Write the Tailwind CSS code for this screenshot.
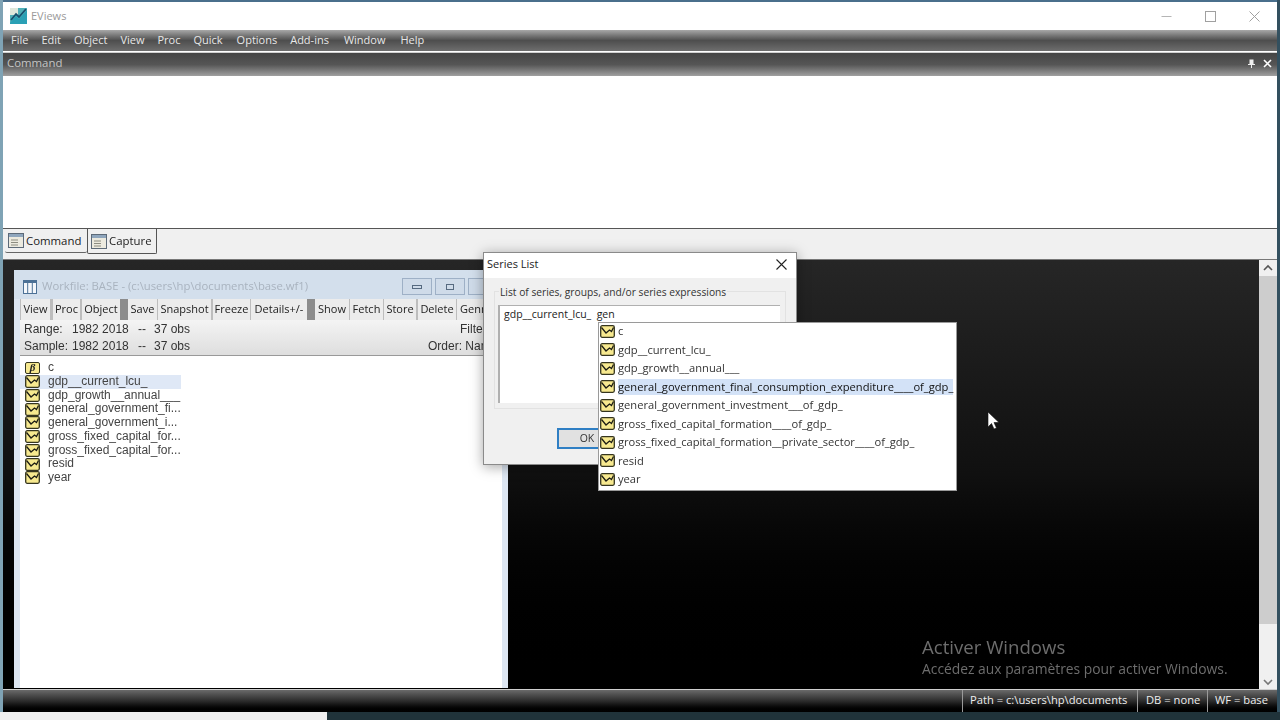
<!DOCTYPE html>
<html>
<head>
<meta charset="utf-8">
<title>EViews</title>
<script src="https://cdn.jsdelivr.net/npm/@tailwindcss/browser@4"></script>
</head>
<body class="w-[1280px] h-[720px] overflow-hidden bg-white font-['Open_Sans',sans-serif]">

<!-- shared icons -->
<svg class="hidden">
    <symbol id="series" viewBox="0 0 15 13">
        <rect x="0.7" y="0.7" width="13.6" height="11.6" rx="1.5" fill="#f7e98f" stroke="#35351f" stroke-width="1.3"/>
        <path d="M1.5 2.5 L6 8 L9.5 5 L11.5 6.5 L13.5 2.5" fill="none" stroke="#1c1c14" stroke-width="1.3"/>
    </symbol>
    <symbol id="doc" viewBox="0 0 16 15">
        <rect x="0.5" y="0.5" width="15" height="14" fill="#eceadf" stroke="#5d6a78"/>
        <rect x="1" y="1" width="14" height="3" fill="#8fa6bd"/>
        <path d="M3 7H10M3 9.5H10M3 12H10" stroke="#8c8c80"/>
    </symbol>
</svg>

<div class="relative w-[1280px] h-[720px] flex flex-col blur-[0.4px] border-l-[3px] border-l-[#7fa3b5] border-r-[3px] border-r-[#33505f]">
    <!-- Title bar -->
    <div class="h-[30px] shrink-0 bg-white flex items-center pl-[7px] border-t-[2px] border-t-[#4a6f8c]">
        <svg width="17" height="16" viewBox="0 0 17 16">
            <rect width="17" height="16" fill="#4fb0b8"/>
            <rect width="8" height="7" fill="#dfe8dc"/>
            <path d="M0 15 L6 8 L9 11 L17 2 V16 H0Z" fill="#2aa0b5"/>
            <path d="M1 12 L6 6 L9 9 L16 1" fill="none" stroke="#17506e" stroke-width="1.8"/>
        </svg>
        <span class="ml-[4px] text-[11px] text-[#9a9a9a]">EViews</span>
        <div class="ml-auto flex items-center gap-[33px] pr-[17px]">
            <svg width="11" height="11" viewBox="0 0 11 11"><path d="M0.5 5.5H10.5" stroke="#b5b5b5"/></svg>
            <svg width="11" height="11" viewBox="0 0 11 11"><rect x="0.5" y="0.5" width="10" height="10" fill="none" stroke="#a0a0a0"/></svg>
            <svg width="11" height="11" viewBox="0 0 11 11"><path d="M0.5 0.5L10.5 10.5M10.5 0.5L0.5 10.5" stroke="#a0a0a0"/></svg>
        </div>
    </div>

    <!-- Menu -->
    <div class="h-[21px] shrink-0 flex items-center pl-[8px] gap-[13px] text-[11px] text-[#e8e8e8] bg-gradient-to-b from-[#a8a8a8] via-[#4e4e4e] to-[#6e6e6e]">
        <span>File</span><span>Edit</span><span>Object</span><span>View</span><span>Proc</span><span>Quick</span><span class="ml-[1px]">Options</span><span>Add-ins</span><span class="ml-[2px]">Window</span><span class="ml-[2px]">Help</span>
    </div>

    <!-- Command pane -->
    <div class="h-[24px] shrink-0 mt-[1px] flex items-center pb-[3px] pl-[4px] pr-[5px] text-[11.4px] text-[#c4c4c4] bg-gradient-to-b from-[#454545] via-[#555555] to-[#a0a0a0] border-t border-[#d0d0d0]">
        <span>Command</span>
        <div class="ml-auto flex items-center gap-[7px]">
            <svg width="9" height="9" viewBox="0 0 9 9"><path d="M2.5 0.5H6.5V5H8V6H5V9H4V6H1V5H2.5Z" fill="#eeeeee"/></svg>
            <svg width="9" height="9" viewBox="0 0 9 9"><path d="M1 1L8 8M8 1L1 8" stroke="#ffffff" stroke-width="1.6"/></svg>
        </div>
    </div>
    <div class="h-[153px] shrink-0 bg-white border-b border-[#555555]"></div>

    <!-- Tabs -->
    <div class="h-[30px] shrink-0 bg-[#f0f0f0] flex items-start pl-[2px] text-[11.4px] text-[#222222]">
        <div class="h-[24px] w-[82px] flex items-center gap-[2px] pl-[3px] border-b border-[#666666] rounded-b-[2px]">
            <svg width="16" height="15"><use href="#doc"/></svg><span>Command</span>
        </div>
        <div class="h-[25px] w-[70px] flex items-center gap-[2px] pl-[3px] border-x border-b border-[#555555] rounded-b-[2px]">
            <svg width="16" height="15"><use href="#doc"/></svg><span>Capture</span>
        </div>
    </div>

    <!-- MDI area + scrollbar -->
    <div class="flex-1 min-h-0 flex border-t border-[#777777]">
        <div class="flex-1 bg-gradient-to-b from-[#262626] via-[#101010] to-[#000000]"></div>
        <div class="w-[18px] flex flex-col items-center bg-[#f0f0f0] pt-[4px] pb-[3px]">
            <svg width="10" height="7" viewBox="0 0 10 7"><path d="M1 6L5 2L9 6" fill="none" stroke="#555555" stroke-width="1.6"/></svg>
            <div class="w-full h-[348px] mt-[5px] bg-[#cdcdcd]"></div>
            <svg class="mt-auto" width="10" height="7" viewBox="0 0 10 7"><path d="M1 1L5 5L9 1" fill="none" stroke="#777777" stroke-width="1.6"/></svg>
        </div>
    </div>

    <!-- Status bar -->
    <div class="h-[23px] shrink-0 flex items-stretch justify-end text-[11.2px] text-[#eeeeee] whitespace-nowrap bg-gradient-to-b from-[#6a6a6a] via-[#2c2c2c] to-[#000000] border-t border-[#cfcfcf]">
        <div class="w-[175px] flex items-center pb-[1px] pl-[7px] border-l border-[#9a9a9a]">Path = c:\users\hp\documents</div>
        <div class="w-[70px] flex items-center pb-[1px] pl-[8px] border-l border-[#9a9a9a]">DB = none</div>
        <div class="w-[70px] flex items-center pb-[1px] pl-[7px] border-l border-[#9a9a9a]">WF = base</div>
    </div>

    <!-- Desktop strip at the very bottom -->
    <div class="h-[8px] shrink-0 flex -ml-[3px] -mr-[3px]">
        <div class="w-[327px] bg-[#efefef]"></div>
        <div class="flex-1 bg-[#20333a]"></div>
    </div>

    <!-- Activation watermark -->
    <div class="absolute left-[919px] top-[635px] text-[#6d6d6d] whitespace-nowrap">
        <div class="text-[18.6px] leading-[24px]">Activer Windows</div>
        <div class="text-[13.85px] leading-[20px]">Accédez aux paramètres pour activer Windows.</div>
    </div>

    <!-- Workfile window -->
    <div class="absolute left-[11px] top-[270px] w-[494px] h-[418px] flex flex-col bg-white border-x-[6px] border-[#dde6f2] font-['Liberation_Sans',sans-serif]">
        <div class="h-[29px] -mx-[6px] shrink-0 flex items-center pl-[9px] pt-[4px] bg-[#d3dfec]">
            <svg width="14" height="14" viewBox="0 0 14 14">
                <rect x="0.5" y="0.5" width="13" height="13" fill="#f4f7fb" stroke="#4c7196"/>
                <path d="M4.7 1V13M9.3 1V13" stroke="#4c7196"/><rect x="1" y="1" width="12" height="2" fill="#4c7196"/>
            </svg>
            <span class="ml-[5px] text-[11.3px] text-[#a9b3bf] font-['Open_Sans',sans-serif]">Workfile: BASE - (c:\users\hp\documents\base.wf1)</span>
            <div class="ml-auto flex gap-[3px] mr-[10px]">
                <div class="w-[30px] h-[17px] flex items-center justify-center border border-[#9eb0c6] bg-[#cfdbe9]"><div class="w-[10px] h-[4px] border border-[#566a80]"></div></div>
                <div class="w-[30px] h-[17px] flex items-center justify-center border border-[#9eb0c6] bg-[#cfdbe9]"><div class="w-[8px] h-[6px] border border-[#566a80]"></div></div>
                <div class="w-[30px] h-[17px] border border-[#9eb0c6] bg-[#cfdbe9]"></div>
            </div>
        </div>
        <!-- Toolbar -->
        <div class="h-[21px] shrink-0 flex items-stretch pl-[1px] bg-[#bdbdbd] text-[11px] text-[#222222] font-['Open_Sans',sans-serif]">
            <div class="w-[29px] flex items-center justify-center bg-[#ececec]">View</div>
            <div class="w-[27px] ml-[3px] flex items-center justify-center bg-[#ececec]">Proc</div>
            <div class="w-[38px] ml-[2px] flex items-center justify-center bg-[#ececec]">Object</div>
            <div class="w-[8px] bg-[#8c8c8c]"></div>
            <div class="w-[29px] flex items-center justify-center bg-[#ececec]">Save</div>
            <div class="w-[54px] flex items-center justify-center bg-[#ececec] border-l border-[#bdbdbd]">Snapshot</div>
            <div class="w-[37px] ml-[2px] flex items-center justify-center bg-[#ececec]">Freeze</div>
            <div class="w-[56px] ml-[1px] flex items-center justify-center bg-[#ececec]">Details+/-</div>
            <div class="w-[8px] bg-[#8c8c8c]"></div>
            <div class="w-[34px] flex items-center justify-center bg-[#ececec]">Show</div>
            <div class="w-[33px] ml-[1px] flex items-center justify-center bg-[#ececec]">Fetch</div>
            <div class="w-[32px] ml-[1px] flex items-center justify-center bg-[#ececec]">Store</div>
            <div class="w-[38px] ml-[2px] flex items-center justify-center bg-[#ececec]">Delete</div>
            <div class="flex-1 ml-[1px] bg-[#ececec] pl-[3px] flex items-center">Genr</div>
        </div>
        <!-- Range / Sample -->
        <div class="h-[36px] shrink-0 flex justify-between pt-[1px] text-[12px] leading-[17px] text-[#333333] bg-gradient-to-b from-[#f4f4f4] to-[#dedede] border-b border-[#999999]">
            <div class="pl-[4px]">
                <div class="flex"><span class="w-[48px]">Range:</span><span class="w-[58px]">1982 2018</span><span class="w-[16px] ml-[8px]">--</span><span>37 obs</span></div>
                <div class="flex"><span class="w-[48px]">Sample:</span><span class="w-[58px]">1982 2018</span><span class="w-[16px] ml-[8px]">--</span><span>37 obs</span></div>
            </div>
            <div class="w-[74px] whitespace-nowrap">
                <div class="pl-[32px]">Filter</div>
                <div>Order: Name</div>
            </div>
        </div>
        <!-- Series list -->
        <div class="flex-1 pt-[5px] text-[12px] leading-[13.75px] text-[#444444]">
            <div class="w-[161px] h-[13.75px] pl-[5px] flex items-center">
                <span class="w-[15px] h-[12px] flex items-center justify-center border border-[#35351f] rounded-[2px] bg-[#f7e98f] text-[11px] font-bold italic text-[#222222] font-['Liberation_Serif',serif]">β</span>
                <span class="ml-[8px]">c</span>
            </div>
            <div class="w-[161px] h-[13.75px] pl-[5px] flex items-center bg-[#dfe8f6]"><svg width="15" height="13" class="shrink-0"><use href="#series"/></svg><span class="ml-[8px]">gdp__current_lcu_</span></div>
            <div class="w-[161px] h-[13.75px] pl-[5px] flex items-center"><svg width="15" height="13" class="shrink-0"><use href="#series"/></svg><span class="ml-[8px]">gdp_growth__annual___</span></div>
            <div class="w-[161px] h-[13.75px] pl-[5px] flex items-center"><svg width="15" height="13" class="shrink-0"><use href="#series"/></svg><span class="ml-[8px]">general_government_fi...</span></div>
            <div class="w-[161px] h-[13.75px] pl-[5px] flex items-center"><svg width="15" height="13" class="shrink-0"><use href="#series"/></svg><span class="ml-[8px]">general_government_i...</span></div>
            <div class="w-[161px] h-[13.75px] pl-[5px] flex items-center"><svg width="15" height="13" class="shrink-0"><use href="#series"/></svg><span class="ml-[8px]">gross_fixed_capital_for...</span></div>
            <div class="w-[161px] h-[13.75px] pl-[5px] flex items-center"><svg width="15" height="13" class="shrink-0"><use href="#series"/></svg><span class="ml-[8px]">gross_fixed_capital_for...</span></div>
            <div class="w-[161px] h-[13.75px] pl-[5px] flex items-center"><svg width="15" height="13" class="shrink-0"><use href="#series"/></svg><span class="ml-[8px]">resid</span></div>
            <div class="w-[161px] h-[13.75px] pl-[5px] flex items-center"><svg width="15" height="13" class="shrink-0"><use href="#series"/></svg><span class="ml-[8px]">year</span></div>
        </div>
    </div>

    <!-- Series List dialog -->
    <div class="absolute left-[480px] top-[252px] w-[314px] h-[213px] bg-[#f0f0f0] border border-[#8a8a8a] shadow-[0_2px_12px_rgba(0,0,0,0.35)]">
        <div class="h-[25px] pb-[2px] bg-white flex items-center pl-[3px] pr-[9px] text-[11px] text-[#222222]">
            <span>Series List</span>
            <svg class="ml-auto" width="11" height="11" viewBox="0 0 11 11"><path d="M0.5 0.5L10.5 10.5M10.5 0.5L0.5 10.5" stroke="#222222" stroke-width="1.1"/></svg>
        </div>
        <div class="relative mx-[10px] mt-[13px] h-[118px] border border-[#e2e2e2] pl-[3px] pr-[5px]">
            <div class="absolute -top-[7px] left-[4px] bg-[#f0f0f0] text-[10.25px] leading-[14px] text-[#333333] px-[1px] whitespace-nowrap">List of series, groups, and/or series expressions</div>
            <div class="mt-[13px] h-[98px] bg-white border-l-2 border-t border-[#b0b0b0] pl-[4px] text-[10.5px] leading-[16px] text-[#222222] whitespace-pre">gdp__current_lcu_  gen</div>
        </div>
        <div class="mt-[19px] ml-[73px] w-[60px] h-[21px] flex items-center justify-center bg-[#e1e1e1] border-2 border-[#2f7fc4] text-[10.5px] text-[#333333]">OK</div>
    </div>

    <!-- Autocomplete dropdown -->
    <div class="absolute left-[595px] top-[322px] w-[359px] h-[169px] bg-white border border-[#9a9a9a] pl-[1px] text-[11.15px] leading-[16px] text-[#333333] whitespace-nowrap">
        <div class="h-[18.5px] -mt-[1px] flex items-center"><svg width="15" height="13" class="shrink-0"><use href="#series"/></svg><span class="ml-[3px]">c</span></div>
        <div class="h-[18.5px] flex items-center"><svg width="15" height="13" class="shrink-0"><use href="#series"/></svg><span class="ml-[3px]">gdp__current_lcu_</span></div>
        <div class="h-[18.5px] flex items-center"><svg width="15" height="13" class="shrink-0"><use href="#series"/></svg><span class="ml-[3px]">gdp_growth__annual___</span></div>
        <div class="h-[18.5px] flex items-center"><svg width="15" height="13" class="shrink-0"><use href="#series"/></svg><span class="ml-[3px] bg-[#d3e2f7] text-[#111111]">general_government_final_consumption_expenditure____of_gdp_</span></div>
        <div class="h-[18.5px] flex items-center"><svg width="15" height="13" class="shrink-0"><use href="#series"/></svg><span class="ml-[3px]">general_government_investment___of_gdp_</span></div>
        <div class="h-[18.5px] flex items-center"><svg width="15" height="13" class="shrink-0"><use href="#series"/></svg><span class="ml-[3px]">gross_fixed_capital_formation____of_gdp_</span></div>
        <div class="h-[18.5px] flex items-center"><svg width="15" height="13" class="shrink-0"><use href="#series"/></svg><span class="ml-[3px]">gross_fixed_capital_formation__private_sector____of_gdp_</span></div>
        <div class="h-[18.5px] flex items-center"><svg width="15" height="13" class="shrink-0"><use href="#series"/></svg><span class="ml-[3px]">resid</span></div>
        <div class="h-[18.5px] flex items-center"><svg width="15" height="13" class="shrink-0"><use href="#series"/></svg><span class="ml-[3px]">year</span></div>
    </div>

    <!-- Mouse pointer -->
    <svg class="absolute left-[984px] top-[411px]" width="13" height="19" viewBox="0 0 13 19">
        <path d="M1 1V16L4.5 12.5L7 18L9.5 17L7 11.5H12Z" fill="#ffffff" stroke="#111111" stroke-width="0.6"/>
    </svg>
</div>
</body>
</html>
